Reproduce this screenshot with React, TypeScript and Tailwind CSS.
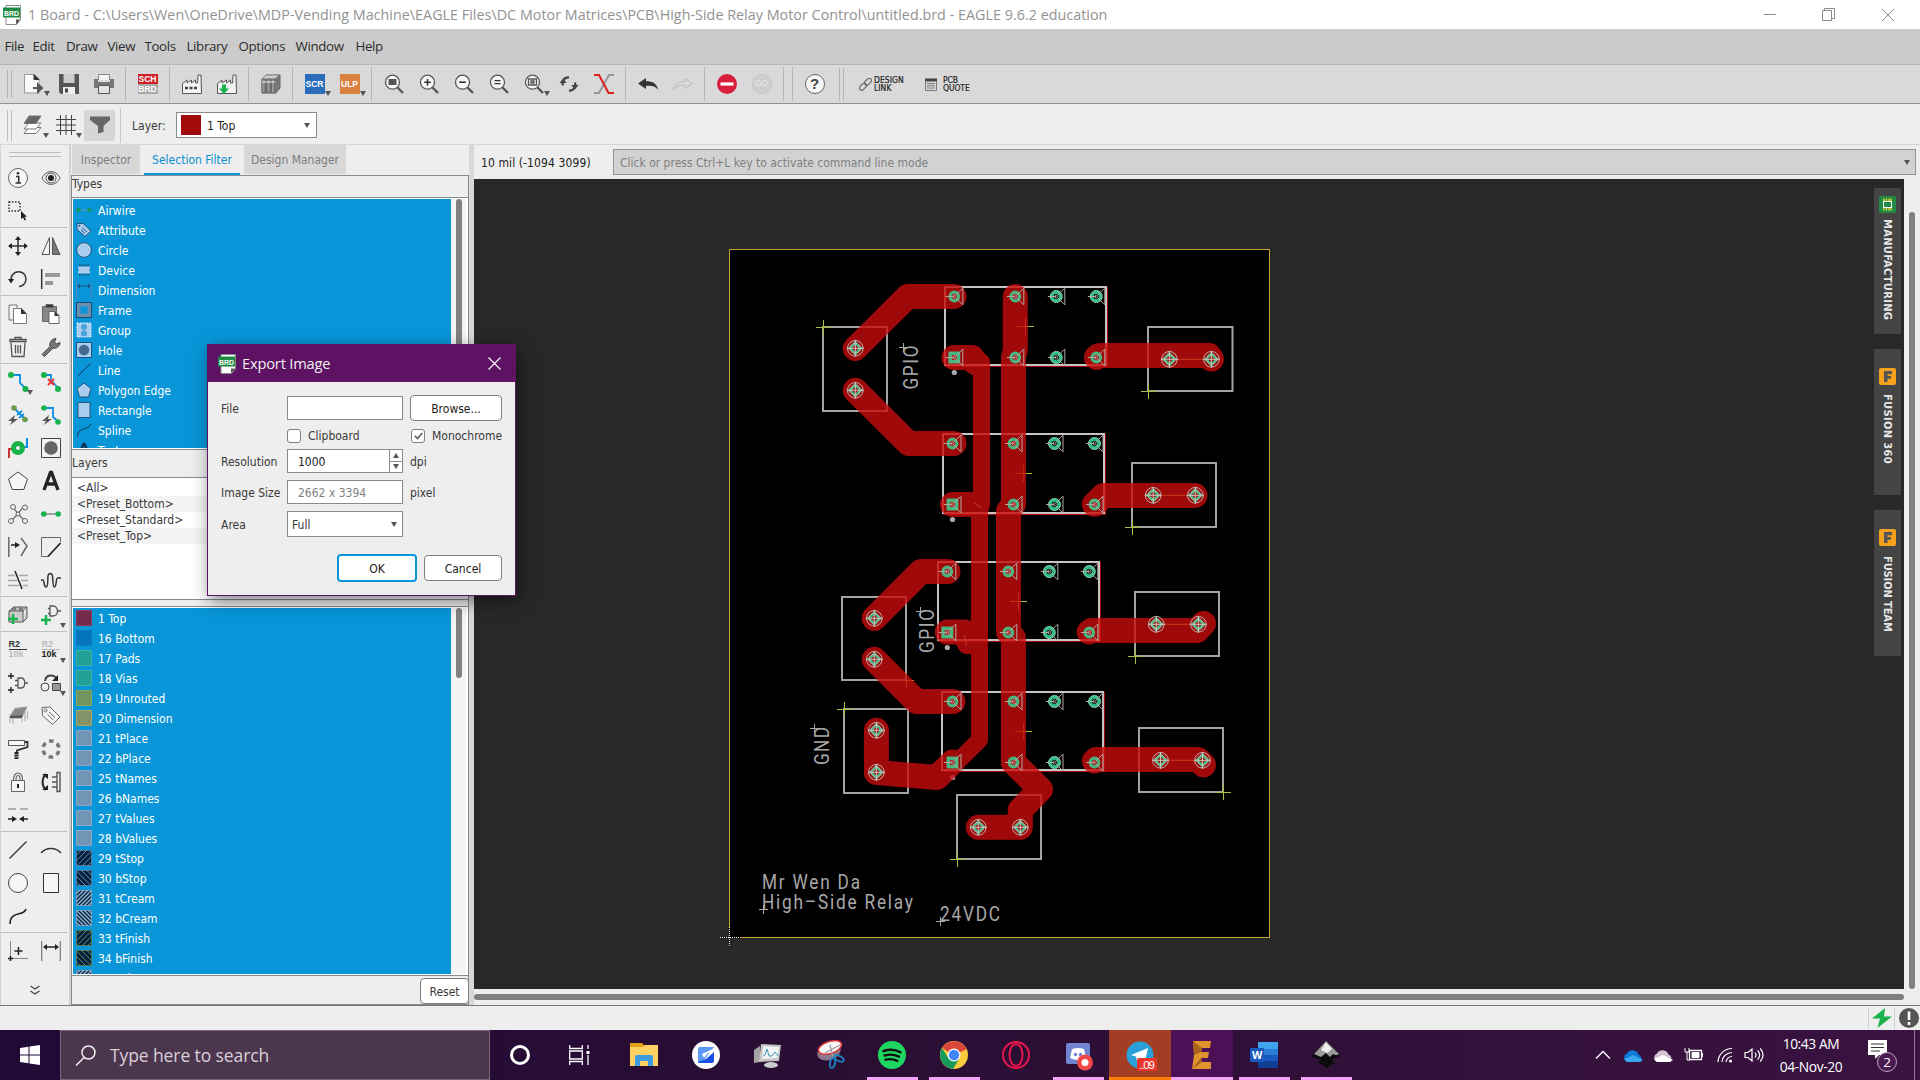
import React from "react";

type Kids = { children?: React.ReactNode };

/* ---------- icon helpers ---------- */
function Ico({ children, s = 20, c = "#333" }: Kids & { s?: number; c?: string }) {
  return (
    <svg width={s} height={s} viewBox="0 0 20 20" fill="none" stroke={c} strokeWidth="1" className="shrink-0 overflow-visible">
      {children}
    </svg>
  );
}

function BrdIcon() {
  return (
    <svg width="18" height="20" viewBox="0 0 18 20" className="shrink-0">
      <path d="M3 .5h14.5v14l-4 5H3z" fill="#fff" stroke="#888" />
      <path d="M13 19.5v-5h4.5z" fill="#555" />
      <rect x="0" y="2.5" width="17" height="10" fill="#1f8a43" />
      <text x="1" y="10.8" fontSize="8" fontWeight="bold" fill="#fff" fontFamily="Liberation Sans, sans-serif" textLength="15" lengthAdjust="spacingAndGlyphs">BRD</text>
    </svg>
  );
}

const Mag = ({ children }: Kids) => (
  <Ico s={20} c="#555">
    <circle cx="8.5" cy="8.2" r="7" fill="#f6f6f6" strokeWidth="1.3" />
    <path d="M13.5 13.5l5.5 5.5" strokeWidth="2.4" />
    {children}
  </Ico>
);

function Tool({ children, menu }: Kids & { menu?: boolean }) {
  return (
    <div className="relative flex h-full w-[35px] items-center justify-center">
      {children}
      {menu && <Drop className="absolute right-[1px] bottom-[7px]" />}
    </div>
  );
}

function Drop({ className = "" }: { className?: string }) {
  return (
    <svg width="6" height="5" viewBox="0 0 6 5" className={className}>
      <path d="M0 0h6L3 5z" fill="#555" />
    </svg>
  );
}

const Sep = () => (
  <div className="flex h-full w-[9px] justify-center">
    <div className="mt-[2px] h-[34px] w-px bg-[#b3b3b3]" />
  </div>
);

/* ---------- top bars ---------- */
function TitleBar() {
  return (
    <div className="flex h-[29px] shrink-0 items-center bg-white">
      <div className="ml-[3px] flex w-[25px]"><BrdIcon /></div>
      <span className="font-['Open_Sans','Noto_Sans',sans-serif] text-[14.3px] tracking-[0.035px] whitespace-nowrap text-[#929292]">
        1 Board - C:\Users\Wen\OneDrive\MDP-Vending Machine\EAGLE Files\DC Motor Matrices\PCB\High-Side Relay Motor Control\untitled.brd - EAGLE 9.6.2 education
      </span>
      <div className="ml-auto flex items-center text-[#8c8c8c]">
        <div className="flex w-[58px] justify-center"><div className="h-px w-3 bg-[#8c8c8c]" /></div>
        <svg className="mr-[21px] ml-[23px]" width="13" height="13" viewBox="0 0 13 13" fill="none" stroke="#8c8c8c"><path d="M.5 2.5h9v10h-9zM2.500 2.500v-2h10v10h-3" /></svg>
        <div className="flex w-16 justify-center"><svg width="12" height="12" viewBox="0 0 12 12" stroke="#8c8c8c"><path d="M0 0l12 12M12 0L0 12" /></svg></div>
      </div>
    </div>
  );
}

const MENUS: [string, number][] = [["File", 28], ["Edit", 33.5], ["Draw", 41.500], ["View", 37], ["Tools", 42], ["Library", 52], ["Options", 57], ["Window", 60], ["Help", 40]];

function MenuBar() {
  return (
    <div className="flex h-[36px] shrink-0 items-center border-b border-[#b5b5b5] bg-[#cbcbcb] pt-px pl-[4.500px] font-['Open_Sans','Noto_Sans',sans-serif] text-[13.300px] tracking-[-0.35px] text-[#2c2c2c]">
      {MENUS.map(([m, w]) => (
        <span key={m} className="whitespace-nowrap" style={{ width: w }}>{m}</span>
      ))}
    </div>
  );
}

function Toolbar() {
  return (
    <div className="flex h-[39px] shrink-0 border-b border-[#929292] bg-[#d9d9d9]">
      <div className="my-[5px] ml-[7px] w-[5px] border-x border-[#b3b3b3]" />
      <div className="w-1" />
      <Tool menu>
        <Ico><path d="M.5 .5h9.500l5 5v13.500H.5z" fill="#fafafa" stroke="#999" /><path d="M10 .5v5h5z" fill="#333" /><path d="M9 14h8M14 10.500l4 3.500-4 3.500z" stroke="#555" strokeWidth="2" /></Ico>
      </Tool>
      <Tool>
        <Ico><path d="M0 0h20v20H2l-2-2z" fill="#555" stroke="none" /><path d="M4.500 0h11v9h-11z" fill="#ccc" stroke="none" /><path d="M4 13h12v7H4z" fill="#eee" stroke="none" /><path d="M6 14.500h3v4H6z" fill="#444" stroke="none" /></Ico>
      </Tool>
      <Tool>
        <Ico><path d="M4.500 6V.5h11V6" fill="#f4f4f4" stroke="#888" /><path d="M0 5h4v3h12V5h4v9H0z" fill="#777" stroke="none" /><path d="M4.500 11.500h11v8h-11z" fill="#e4e4e4" stroke="#555" /></Ico>
      </Tool>
      <Sep />
      <Tool>
        <div className="flex h-5 w-5 flex-col text-center font-['Liberation_Sans',sans-serif] text-[8.500px] leading-[10px] font-bold text-white">
          <span className="bg-[#cc2127]">SCH</span><span className="bg-[#a9a9a9]">BRD</span>
        </div>
      </Tool>
      <Sep />
      <Tool><Factory /></Tool>
      <Tool><Factory down /></Tool>
      <Sep />
      <Tool>
        <Ico><path d="M1 5l4-4h14v13l-4 5H1z" fill="#777" stroke="#666" /><path d="M1 5l4-4h13l-4 4z" fill="#ccc" stroke="#888" /><path d="M1 5h3v14H1zM6 5h3v14H6zM10.500 5h3v14h-3z" fill="#999" stroke="#555" strokeWidth=".6" /><path d="M1 8h13" stroke="#eee" /></Ico>
      </Tool>
      <Sep />
      <Tool menu><div className="flex h-5 w-5 items-center justify-center bg-[#2a6ebb] font-['Liberation_Sans',sans-serif] text-[8.500px] font-bold text-white">SCR</div></Tool>
      <Tool menu><div className="flex h-5 w-5 items-center justify-center bg-[#db8240] font-['Liberation_Sans',sans-serif] text-[8.500px] font-bold text-white">ULP</div></Tool>
      <Sep />
      <Tool><Mag><path d="M4.500 5h8v6h-8z" fill="#555" stroke="none" /></Mag></Tool>
      <Tool><Mag><path d="M8.500 5v6.500M5.200 8.200h6.600" stroke="#333" strokeWidth="1.600" /></Mag></Tool>
      <Tool><Mag><path d="M5.200 8.200h6.600" stroke="#333" strokeWidth="1.600" /></Mag></Tool>
      <Tool><Mag><path d="M5.500 6.700h6M5.500 9.700h6" stroke="#333" strokeWidth="1.300" /></Mag></Tool>
      <Tool menu><Mag><path d="M4.500 5h8v6h-8zM7 7h3v2H7z" stroke="#555" strokeWidth="1.300" /></Mag></Tool>
      <Tool>
        <Ico c="#444"><path d="M10 3.500C4.500 3 3 8 4 11.500M10 16.500c5.500.5 7-4.500 6-8" strokeWidth="2.300" /><path d="M.5 9l3.500-4.500L7.800 9zM12.200 11l3.800 4.500 3.500-4.500z" fill="#444" stroke="none" /></Ico>
      </Tool>
      <Tool>
        <Ico><path d="M20 1h-5L5 19H0" stroke="#999" strokeWidth="2" /><path d="M0 1h5l9.500 18H20" stroke="#dd1f1f" strokeWidth="2" /></Ico>
      </Tool>
      <Sep />
      <Tool><Ico><path d="M0 9.500L8 4v3.200c7 0 11 2.500 12 8.800-3-4-6-4.200-12-4.200V15z" fill="#333" stroke="none" /></Ico></Tool>
      <Tool><Ico><path d="M19.500 9.500L12 4.500v3c-6 0-10.500 2-11.500 8 3-3.500 6-4 11.500-4v3z" stroke="#bbb" /></Ico></Tool>
      <Sep />
      <Tool><Ico><circle cx="10" cy="10" r="10" fill="#d91f3c" stroke="none" /><path d="M3.500 10h13" stroke="#fff" strokeWidth="3.200" /></Ico></Tool>
      <Tool>
        <div className="flex h-5 w-5 items-center justify-center rounded-full border border-[#c4c4c4] bg-[#cfcfcf] font-['Liberation_Sans',sans-serif] text-[9px] text-[#e8e8e8]">GO</div>
      </Tool>
      <Sep /><Sep />
      <Tool>
        <div className="flex h-5 w-5 items-center justify-center rounded-full border border-[#666] bg-[#f6f6f6] font-['Liberation_Sans',sans-serif] text-[15px] font-bold text-[#444]">?</div>
      </Tool>
      <div className="mt-[3px] ml-[7px] h-[33px] w-[5px] border-x border-[#b3b3b3]" />
      <div className="ml-[15px] flex items-center">
        <svg width="13" height="13" viewBox="0 0 13 13" fill="none" stroke="#666" strokeWidth="1.100"><rect x="5" y="1.500" width="8" height="4.500" rx="2.200" transform="rotate(-45 9 3.700)" /><rect x="0" y="6.500" width="8" height="4.500" rx="2.200" transform="rotate(-45 4 8.800)" /></svg>
        <Lbl a="DESIGN" b="LINK" w="ml-[2px] w-[52px] tracking-[0.05px]" />
        <svg width="12" height="13" viewBox="0 0 12 13" className="-ml-[1px]"><path d="M0 .5h12v3H0z" fill="#444" /><path d="M.5 3v9.500h11V3M2 5.500h8M2 7.700h8M2 10h8" fill="none" stroke="#777" /></svg>
        <Lbl a="PCB" b="QUOTE" w="ml-[6px] w-[50px] tracking-[-0.1px]" />
      </div>
    </div>
  );
}

function Lbl({ a, b, w }: { a: string; b: string; w: string }) {
  return (
    <div className={`${w} font-['DejaVu_Sans_Condensed','DejaVu_Sans',sans-serif] text-[8.500px] leading-[8px] text-[#222] [-webkit-text-stroke:0.2px_#222]`}>
      <div>{a}</div><div>{b}</div>
    </div>
  );
}

function Factory({ down }: { down?: boolean }) {
  return (
    <Ico c="#555">
      <path d="M.5 19.500v-10L5 6v3l4.500-3v3l4-3v3h2.200L16 1h3l.5 18.500z" fill="#f3f3f3" />
      {down ? <path d="M5 10.500h4v4h3l-5 5.500-5-5.500h3z" fill="#19b24b" stroke="none" /> : <path d="M3 14h12" strokeWidth="2.500" strokeDasharray="3 1.500" stroke="#444" />}
    </Ico>
  );
}

function LayerBar() {
  return (
    <div className="flex h-[41px] shrink-0 items-center border-b border-[#d6d6d6] bg-[#eee] pt-[2px]">
      <div className="ml-[7px] h-[31px] w-[5px] border-x border-[#bdbdbd]" />
      <div className="relative ml-[11px] flex w-[22px]">
        <Ico c="#777"><path d="M1 18.500l5-6h12l-5 6z" fill="#fff" /><path d="M1 14l5-6h12l-5 6z" fill="#fff" /><path d="M1 8.500l5-7.500h12l-5 7.500z" fill="#666" /></Ico>
        <Drop className="absolute -right-[4px] -bottom-[3px]" />
      </div>
      <div className="relative ml-[11px] flex w-[26px]">
        <Ico c="#444"><path d="M0 4.500h20M0 10h20M0 15.500h20M4.500 0v20M10 0v20M15.500 0v20" /></Ico>
        <Drop className="absolute right-0 -bottom-[3px]" />
      </div>
      <div className="ml-[2px] flex h-[31px] w-[31px] items-center justify-center rounded-[2px] bg-[#d6d6d6]">
        <Ico><path d="M0 1.500h20V5l-6.500 6v6L8 18.500V11L0 5z" fill="#666" stroke="none" /></Ico>
      </div>
      <div className="ml-[5px] h-[35px] w-px bg-[#c8c8c8]" />
      <span className="mt-[2px] ml-[11px] w-[44px]">Layer:</span>
      <div className="flex h-[26px] w-[141px] items-center border border-[#8a8a8a] bg-white pr-1.5 pl-1">
        <div className="h-5 w-5 bg-[#a00a0a]" />
        <span className="mt-[2px] ml-[6px] flex-1 text-[#222]">1 Top</span>
        <Drop />
      </div>
    </div>
  );
}

/* ---------- left tool palette ---------- */
const G = "#19b24b";
const B = "#0a8fe0";
const P: Record<string, React.ReactNode> = {
  info: <Ico c="#666"><circle cx="10" cy="10" r="9.500" fill="#f6f6f6" /><path d="M8 8.500h2.700V15M7.500 15h5.500" stroke="#333" strokeWidth="1.600" /><circle cx="10" cy="5.300" r="1.300" fill="#333" stroke="none" /></Ico>,
  eye: <Ico c="#555"><path d="M1 10c4-8.500 14-8.500 18 0-4 8.500-14 8.500-18 0z" /><circle cx="10" cy="10" r="5" /><circle cx="10" cy="10" r="3" fill="#222" stroke="none" /></Ico>,
  select: <Ico><path d="M1 1h11v9H1z" strokeDasharray="1.500 1.500" strokeWidth="1.500" /><path d="M13 10v8l2-1.500 1.500 3 1.500-.7-1.500-3h2.500z" fill="#222" stroke="none" /></Ico>,
  move: <Ico><path d="M10 2v16M2 10h16" strokeWidth="1.500" /><path d="M10 0l3 4H7zM10 20l3-4H7zM0 10l4-3v6zM20 10l-4-3v6z" fill="#222" stroke="none" /></Ico>,
  mirror: <Ico c="#555"><path d="M8.500 1.500v17H1z" fill="#f6f6f6" /><path d="M11.500 1.500v17H19z" fill="#777" /></Ico>,
  rotate: <Ico><path d="M3 12C2 0 18 0 18 10c0 5-4 7.500-7 7.500" strokeWidth="1.500" /><path d="M0 10h6l-3 4.500z" fill="#222" stroke="none" /></Ico>,
  align: <Ico><path d="M.7 0v20" strokeWidth="1.500" stroke="#333" /><path d="M4 6h15" stroke="#999" strokeWidth="4" /><path d="M4 14h8" stroke="#999" strokeWidth="4" /></Ico>,
  copy: <Ico c="#777"><path d="M1 1h8v15H1z" fill="#f2f2f2" /><path d="M5.500 4.500h8l5 5v10h-13z" fill="#fff" /><path d="M13 4l5.500 6H13z" fill="#333" stroke="none" /></Ico>,
  paste: <Ico c="#666"><path d="M1.500 2.500h14v15h-14z" fill="#888" /><path d="M5 .5h7v3H5z" fill="#333" /><path d="M8 7.500h6l4 4v8H8z" fill="#fff" /><path d="M13.500 7l4.500 5h-4.500z" fill="#333" stroke="none" /></Ico>,
  trash: <Ico c="#555"><path d="M3 5.500l1 14h12l1-14M2 4.500h16v-2H2zM7 2V.5h6V2M7.500 8v8.500M10 8v8.500M12.500 8v8.500" strokeWidth="1.300" /></Ico>,
  wrench: <Ico c="#444"><path d="M1 17.500l8-8c-1-4 2-8 6-8L13.500 5l2 2L19 5.500c0 4-4 6.500-7 5.500l-8.500 8.500z" fill="#777" /></Ico>,
  route: <Ico><path d="M3 3h9v8l6 6" stroke={B} strokeWidth="1.800" /><circle cx="3" cy="3" r="3" fill={G} stroke="none" /><circle cx="17.500" cy="17" r="3" fill={G} stroke="none" /></Ico>,
  ripup: <Ico><path d="M3 3h7v5l7 8" stroke={B} strokeWidth="1.800" /><circle cx="3" cy="3" r="3" fill={G} stroke="none" /><circle cx="17" cy="17" r="3" fill={G} stroke="none" /><path d="M7 7l6 6M13 7l-6 6" stroke="#e33" strokeWidth="2" /></Ico>,
  fast1: <Ico><path d="M6 3l11 11M9 10l5-4M11 13l5-4" stroke={B} strokeWidth="1.800" /><circle cx="6" cy="3" r="2.800" fill="#6a9b4a" stroke="none" /><circle cx="17" cy="14.500" r="2.800" fill="#6a9b4a" stroke="none" /><path d="M7 10l-7 6h4l-2 4 8-6H6z" fill="#555" stroke="none" /></Ico>,
  fast2: <Ico><path d="M3 3h9v9l6 5" stroke={B} strokeWidth="1.800" /><circle cx="3" cy="3" r="2.800" fill={G} stroke="none" /><circle cx="17" cy="17" r="2.800" fill={G} stroke="none" /><path d="M8 10l-7 6h4l-2 4 8-6H7z" fill="#555" stroke="none" /></Ico>,
  via: <Ico><path d="M1 20v-9h6" stroke="#c33" strokeWidth="2" /><path d="M19 0v9h-5" stroke={B} strokeWidth="2" /><circle cx="10" cy="10" r="4.500" stroke={G} strokeWidth="5" /></Ico>,
  hole: <Ico c="#444"><path d="M.5 .5h19v19H.5z" fill="#f2f2f2" /><circle cx="10" cy="10" r="6.800" fill="#666" stroke="none" /></Ico>,
  poly: <Ico c="#444"><path d="M10 1l9.500 7-3.700 10.500H4.200L.5 8z" fill="#f6f6f6" /></Ico>,
  text: <Ico><path d="M3 19L9.500 1.500h1L17 19M5.500 13h9" strokeWidth="3.300" stroke="#222" /></Ico>,
  junction: <Ico c="#666"><path d="M5 3.500l5 6 5-6M10 10l-6 6M10 10l6 6" strokeWidth="1.200" /><g fill="#eee"><circle cx="5" cy="3" r="2.500" /><circle cx="17" cy="3.500" r="2.500" /><circle cx="3" cy="17" r="2.500" /><circle cx="17" cy="17" r="2.500" /><circle cx="10" cy="10" r="2" /></g></Ico>,
  signal: <Ico><path d="M3 10h14" stroke="#999" strokeWidth="1.800" /><circle cx="2.800" cy="10" r="2.800" fill={G} stroke="none" /><circle cx="17.200" cy="10" r="2.800" fill={G} stroke="none" /></Ico>,
  bend: <Ico c="#666"><path d="M.8 0v20" strokeWidth="1.500" /><path d="M3 8h5" stroke="#222" strokeWidth="1.500" /><path d="M7 5l5 3-5 3z" fill="#222" stroke="none" /><path d="M13 1l6 8-6 10" strokeWidth="1.500" /></Ico>,
  miter: <Ico c="#666"><path d="M7 19.500H.5V.5h19V5" /><path d="M7 19.500L19.500 6" stroke="#222" strokeWidth="1.700" /></Ico>,
  split: <Ico c="#aaa"><path d="M0 5.500h7M11 5.500h9M0 10.500h9M13 10.500h7M0 15.500h11M15 15.500h5" strokeWidth="1.500" /><path d="M7 1l7 18" stroke="#222" strokeWidth="1.500" /></Ico>,
  meander: <Ico><path d="M0 10h2c1.500 0 .5 7 3 7s1.500-8 2-11c.5-3.500 4-3.500 4.500 0s0 11 2 11 1.500-9 3-9H20" strokeWidth="1.500" /></Ico>,
  addpart: <Ico c="#555"><path d="M1 6l5-4h13l-4 4zM1 6v11h14V6M15 17l4-4V2" fill="#ccc" /><ellipse cx="6" cy="4" rx="2" ry="1" /><ellipse cx="13" cy="4" rx="2" ry="1" /><path d="M0 14h10M5 9v10" stroke={G} strokeWidth="2.500" /></Ico>,
  addgate: <Ico c="#555"><path d="M9 1h3c6 0 6 10 0 10H9zM7 3.500h2M7 8.500h2M16.500 6H20" strokeWidth="1.300" /><path d="M0 15h10M5 10v10" stroke={G} strokeWidth="2.500" /></Ico>,
  repl: <Ico c="#555"><path d="M10 5h3c5 0 5 10 0 10h-3zM7 7.500h3M7 12.500h3M16.500 10H20" strokeWidth="1.300" /><path d="M0 3h6M3 0v6M0 17h6M3 14v6" stroke="#222" strokeWidth="1.400" /></Ico>,
  change: <Ico c="#444"><circle cx="4" cy="14" r="4" /><path d="M11.500 10.500h8v7h-8z" fill="#999" /><path d="M4 8c1-7 9-7 12-2" strokeWidth="2" /><path d="M17 2v6h-6z" fill="#222" stroke="none" /></Ico>,
  paint: <Ico c="#999"><path d="M2 17v-5M5 18v-6M14 16v-6M17 15V6M19.500 13V5" stroke="#aaa" /><path d="M2 10L7 2.500 19 1l-4 8-2 3H2z" fill="#888" /><path d="M2 10l13-1-1.500 3H2z" fill="#555" stroke="none" /></Ico>,
  tag: <Ico c="#666"><path d="M1 1.500l8-.5 10 10-7.500 7.500-10-9z" fill="#f6f6f6" /><circle cx="4.500" cy="4.500" r="1.500" /><path d="M8 6l6 5.500M6.500 8.500l6 5.500" /></Ico>,
  roller: <Ico c="#555"><path d="M.5 1.500h16v5H.5z" fill="#f6f6f6" /><path d="M17 3h2.500v5L9 11.500V14" stroke="#333" strokeWidth="1.800" /><path d="M8.500 13v7" strokeWidth="4" strokeDasharray="2 .6" stroke="#222" /></Ico>,
  array: <Ico c="#777"><circle cx="10" cy="10" r="8" strokeWidth="3.500" strokeDasharray="4.500 3.880" strokeDashoffset="-2" /></Ico>,
  lock: <Ico c="#666"><path d="M3.500 8.500h13v11h-13z" fill="#f6f6f6" /><path d="M5.500 8.500C5 -1.500 15-1.500 14.500 8.500M8 8c0-6 4-6 4 0" strokeWidth="1.200" /><path d="M10 12v4" stroke="#222" strokeWidth="2" /></Ico>,
  swap: <Ico c="#333"><path d="M5 2c-4.500 4-4.500 12 0 16" strokeWidth="2.200" /><path d="M1 2h6v5zM1 18h6v-5z" fill="#222" stroke="none" /><path d="M16 .5h3v19h-3zM11 5h5M11 10h5M11 15h5" stroke="#555" strokeWidth="1.400" /></Ico>,
  opt: <Ico c="#999"><path d="M0 4h8M12 4h8" strokeWidth="1.500" /><path d="M0 14h5M20 14h-5" stroke="#222" strokeWidth="1.500" /><path d="M4 11l5 3-5 3zM16 11l-5 3 5 3z" fill="#222" stroke="none" /></Ico>,
  line: <Ico><path d="M1.500 18.500l17-17" strokeWidth="1.300" /></Ico>,
  arc: <Ico><path d="M0 13c5-6 15-6 20 0" strokeWidth="1.300" /></Ico>,
  circle: <Ico c="#444"><circle cx="10" cy="10" r="9.500" fill="#f6f6f6" /></Ico>,
  rect: <Ico c="#333"><path d="M2.500 .5h15v19h-15z" fill="#f6f6f6" /></Ico>,
  spline: <Ico><path d="M2 18C2 4 16 11 18 3" strokeWidth="1.600" stroke="#222" /></Ico>,
  mark: <Ico c="#888"><path d="M2.500 0v17M5 17.500h15" /><path d="M10.500 6v8M6.500 10h8M2.500 15v5M0 17.500h5" stroke="#222" strokeWidth="1.500" /></Ico>,
  dim: <Ico c="#777"><path d="M.7 0v20M19.300 0v20" strokeWidth="1.200" /><path d="M3 6h14" stroke="#222" strokeWidth="1.500" /><path d="M2 6l4-3v6zM18 6l-4-3v6z" fill="#222" stroke="none" /></Ico>,
};

const RTwo = ({ flip }: { flip?: boolean }) => (
  <div className="flex w-[18px] flex-col font-['Liberation_Sans',sans-serif] text-[9px] leading-[9px] font-bold">
    <span className={`border-b ${flip ? "border-[#bbb] text-[#bbb]" : "border-[#333] text-[#333]"}`}>R2</span>
    <span className={flip ? "text-[#222]" : "text-[#bbb]"}>10k</span>
  </div>
);

const PALETTE: (string | null)[][] = [
  ["info", "eye", "select", null],
  ["move", "mirror", "rotate", "align"],
  ["copy", "paste", "trash", "wrench"],
  ["route", "ripup", "fast1", "fast2", "via", "hole", "poly", "text", "junction", "signal", "bend", "miter", "split", "meander"],
  ["addpart", "addgate"],
  ["r2", "r2b", "repl", "change", "paint", "tag", "roller", "array", "lock", "swap", "opt", null],
  ["line", "arc", "circle", "rect", "spline", null],
  ["mark", "dim"],
];
const DROPS = ["route", "addgate", "r2b", "change"];

function Palette() {
  return (
    <div className="flex w-[71px] shrink-0 flex-col border-r-2 border-l border-[#d2d2d2] bg-[#eee]">
      <div className="mx-2 mt-[7px] mb-[4px] h-[5px] w-[52px] border-y border-[#bdbdbd]" />
      {PALETTE.map((g, i) => (
        <div key={i} className={`mr-[2px] grid grid-cols-[33px_33px] ${i ? "border-t border-[#c0c0c0] pt-px" : ""}`}>
          {g.map((n, j) => (
            <div key={j} className="relative flex h-[33px] items-center justify-center">
              {n === "r2" ? <RTwo /> : n === "r2b" ? <RTwo flip /> : n && P[n]}
              {n && DROPS.includes(n) && <Drop className="absolute right-[1px] bottom-[3px]" />}
            </div>
          ))}
        </div>
      ))}
      <div className="mt-[18px] flex justify-center">
        <svg width="10" height="10" viewBox="0 0 10 10" fill="none" stroke="#444" strokeWidth="1.300"><path d="M.5 1L5 4l4.500-3M.5 6L5 9l4.500-3" /></svg>
      </div>
    </div>
  );
}

/* ---------- selection filter panel ---------- */
const L = "#a9cdee";
const D = "#1d5480";
const TYPES: [string, React.ReactNode][] = [
  ["Airwire", <><path d="M5 8h6" stroke="#5a9ac8" strokeWidth="1.300" /><circle cx="2.500" cy="8" r="2.300" fill="#149a6a" stroke="none" /><circle cx="13.500" cy="8" r="2.300" fill="#149a6a" stroke="none" /></>],
  ["Attribute", <><path d="M1 1.500h6l8 7.500-6 5.500-8-7z" fill={L} stroke={D} /><path d="M6 5.500l5 4.500M5 8l4 3.500" stroke={D} /><circle cx="3.500" cy="3.800" r="1" fill={D} stroke="none" /></>],
  ["Circle", <circle cx="8" cy="8" r="7.400" fill={L} stroke={D} />],
  ["Device", <><path d="M4 2.500v11M6.700 2.500v11M9.300 2.500v11M12 2.500v11" stroke={D} strokeWidth="1.500" /><path d="M2 4.500h12v2.300q-2 1.200 0 2.400v2.300H2V9.200q2-1.200 0-2.400z" fill={L} stroke="none" /></>],
  ["Dimension", <><path d="M.5 0v16M15.500 0v16" stroke="#4a88b8" /><path d="M2 4h12" stroke={D} /><path d="M1 4l3-2.500v5zM15 4l-3-2.500v5z" fill={D} stroke="none" /></>],
  ["Frame", <><path d="M2.500 2.500h11v11h-11z" stroke="#6b8fb0" strokeWidth="4" /><path d="M.5 .5h15v15H.5z" stroke="#1d4870" /></>],
  ["Group", <><path d="M1 1h14v14H1z" fill={L} stroke="#d4e8fa" strokeDasharray="2 1" /><circle cx="8" cy="5" r="3" fill="#4aa2dc" stroke="none" /><circle cx="8" cy="11.500" r="3" fill="#4aa2dc" stroke="none" /></>],
  ["Hole", <><path d="M.5 .5h15v15H.5z" fill={L} stroke={D} /><circle cx="8" cy="8" r="5.300" fill="#44698f" stroke="none" /></>],
  ["Line", <path d="M1.500 14.500l13-13" stroke="#0c3558" />],
  ["Polygon Edge", <path d="M8 1l7 5.500-2.500 8.500h-9L1 6.500z" fill={L} stroke={D} />],
  ["Rectangle", <path d="M2 .5h12v15H2z" fill={L} stroke={D} />],
  ["Spline", <path d="M1.500 14.500C2 4 13 9 14.500 2" stroke="#0c3558" />],
  ["Text", <path d="M2 15L7.500 2h1L14 15M4.500 11h7" stroke="#0c3558" strokeWidth="2.600" />],
];

const LAYERS: [string, string, string][] = [
  ["1 Top", "#742a4a", "#8d3a56"], ["16 Bottom", "#0575bb", "#057cc4"], ["17 Pads", "#22a095", "#3bb5a2"], ["18 Vias", "#22a095", "#3bb5a2"],
  ["19 Unrouted", "#71965f", "#88a85e"], ["20 Dimension", "#859468", "#a5a566"], ["21 tPlace", "#7295b5", "#8aa8c4"], ["22 bPlace", "#7295b5", "#8aa8c4"],
  ["25 tNames", "#7295b5", "#8aa8c4"], ["26 bNames", "#7295b5", "#8aa8c4"], ["27 tValues", "#7295b5", "#8aa8c4"], ["28 bValues", "#7295b5", "#8aa8c4"],
  ["29 tStop", "/", "#7295b5"], ["30 bStop", "\\", "#7295b5"], ["31 tCream", "//", "#8fb0cc"], ["32 bCream", "\\\\", "#8fb0cc"],
  ["33 tFinish", "/", "#71965f"], ["34 bFinish", "\\", "#71965f"], ["35 tGlue", "//", "#8fb0cc"],
];

function Swatch({ fill, edge }: { fill: string; edge: string }) {
  const hatch = fill[0] === "/" || fill[0] === "\\";
  if (!hatch) return <div className="h-4 w-4 border" style={{ background: fill, borderColor: edge }} />;
  const dense = fill.length > 1;
  const step = dense ? 4 : 5.500;
  const lines = Array.from({ length: 9 }, (_, i) => i * step);
  return (
    <svg width="16" height="16" viewBox="0 0 16 16">
      <rect width="16" height="16" fill="#04223f" />
      <g stroke={edge} strokeWidth={dense ? 1.500 : 0.900} transform={fill[0] === "\\" ? "matrix(-1 0 0 1 16 0)" : undefined}>
        {lines.map((n) => <path key={n} d={`M0 ${n}L${n} 0`} />)}
      </g>
      <rect x=".5" y=".5" width="15" height="15" fill="none" stroke={edge} strokeOpacity=".7" />
    </svg>
  );
}

function ListScroll({ handle }: { handle: string }) {
  return (
    <div className="w-[15px] shrink-0 bg-[#f4f4f4] pl-[5px]">
      <div className={`${handle} w-[6px] rounded-[3px] bg-[#808080]`} />
    </div>
  );
}

function SidePanel() {
  return (
    <div className="flex w-[398px] shrink-0 flex-col bg-[#eee]">
      <div className="flex h-[30px] shrink-0 pl-px text-[#7d7d7d]">
        <div className="flex h-[29px] w-[68px] items-center justify-center bg-[#d8d8d8] pt-px">Inspector</div>
        <div className="ml-[4px] flex h-[31px] w-[96px] items-center justify-center border-b-[3px] border-[#0a96d8] pt-[2px] whitespace-nowrap text-[#0a8fd4]">Selection Filter</div>
        <div className="ml-[4px] flex h-[29px] w-[102px] items-center justify-center bg-[#d8d8d8] pt-px whitespace-nowrap">Design Manager</div>
      </div>
      <div className="flex min-h-0 flex-1 flex-col border border-[#858a95]">
        <div className="h-[21px] shrink-0 leading-[17px]">Types</div>
        <div className="flex h-[253px] shrink-0 border-y border-[#858a95] bg-white pt-px pr-[2px] pb-px pl-px">
          <div className="flex-1 overflow-hidden bg-[#0896d8] pt-[1px]">
            {TYPES.map(([n, ic]) => (
              <div key={n} className="flex h-5 items-center pl-[3px] text-white">
                <svg width="16" height="16" viewBox="0 0 16 16" fill="none" className="mr-[6px]">{ic}</svg>
                <span className="mt-[2px]">{n}</span>
              </div>
            ))}
          </div>
          <ListScroll handle="h-full" />
        </div>
        <div className="h-[27px] shrink-0 leading-[27px]">Layers</div>
        <div className="h-[123px] shrink-0 border-y border-[#858a95] bg-white pt-[2px] leading-4">
          {["<All>", "<Preset_Bottom>", "<Preset_Standard>", "<Preset_Top>"].map((t) => (
            <div key={t} className="h-4 pl-[5px] even:bg-[#f4f4f4]">{t}</div>
          ))}
        </div>
        <div className="h-[6px] shrink-0" />
        <div className="flex min-h-0 flex-1 border-y border-[#858a95] bg-white pt-px pr-[2px] pb-px pl-px">
          <div className="flex-1 overflow-hidden bg-[#0896d8]">
            {LAYERS.map(([n, f, e]) => (
              <div key={n} className="flex h-5 items-center gap-[6px] pl-[3px] text-white">
                <Swatch fill={f} edge={e} />
                <span className="mt-[2px]">{n}</span>
              </div>
            ))}
          </div>
          <ListScroll handle="h-[70px]" />
        </div>
        <div className="flex h-[28px] shrink-0 justify-end pt-[2px]">
          <div className="-mr-px flex h-[26px] w-[49px] items-center justify-center rounded-[4px] border border-[#808080] bg-white pt-px">Reset</div>
        </div>
      </div>
    </div>
  );
}

/* ---------- board drawing (coordinates in window pixels) ---------- */
type Pt = [number, number];
const CONNS: { box: [number, number, number, number]; pads: Pt[]; mark: Pt; air?: boolean }[] = [
  { box: [823, 327, 64, 84], pads: [[855.300, 348.300], [855.300, 390.300]], mark: [823.500, 327.500] },
  { box: [1148, 327, 84.500, 64], pads: [[1169.400, 359.300], [1211.400, 359.300]], mark: [1148.500, 391.500], air: true },
  { box: [1132, 463, 84, 64], pads: [[1153.200, 495.300], [1195.300, 495.300]], mark: [1132.500, 527.500], air: true },
  { box: [1135, 592, 84, 64], pads: [[1156.300, 624.300], [1198.400, 624.300]], mark: [1135.500, 656.500], air: true },
  { box: [1139, 728, 84, 64], pads: [[1160.500, 760.300], [1202.500, 760.300]], mark: [1223.500, 792.500], air: true },
  { box: [842, 597, 64, 83], pads: [[874.300, 618.300], [874.300, 659.300]], mark: [906.500, 680.500] },
  { box: [844, 709, 64, 84], pads: [[876.400, 730.300], [876.400, 772.300]], mark: [844.500, 709.500] },
  { box: [957, 795, 84, 64], pads: [[978.300, 827.300], [1020.300, 827.300]], mark: [957.500, 859.500] },
];
const RELAYS: { o: Pt; box: [number, number, number, number] }[] = [
  { o: [954.300, 296.500], box: [945, 287, 161, 78] },
  { o: [952.500, 443.500], box: [943, 434, 161, 79] },
  { o: [947.300, 571.500], box: [938, 562, 161, 78] },
  { o: [952.500, 701.500], box: [942, 692, 161, 78] },
];
const COLS = [0, 61, 102, 142];
const WIDE = [
  "M855.300 348.500L907.700 296.500H954", "M855.300 390.300L908.700 443.500H954",
  "M1015.300 296.500V350L1013.500 358V504L1008.500 511V632L1013.400 638V762.300L1040.500 789.300L1020.300 810V827.300H978.300",
  "M954 357.500H972L976 363", "M952.500 504.500H975", "M947.300 632H965",
  "M876.400 730.300V772.500L937 777.500L952.500 762",
  "M1096.400 357.500L1099 355.500H1209L1211.400 359", "M1094.400 504.300L1103.500 495.500H1195", "M1089.200 632L1091 630.500H1197L1203.500 623.500", "M1094.400 761L1096 759.500H1198L1203.500 765",
  "M874.300 618.300L921 571.500H948", "M874.300 659.300L916.500 701.500H953",
];
const NARROW = ["M966 362H981.500V504L979.500 512V740L955 764", "M958 632L966.500 645.500H979"];

function RelayPads({ o }: { o: Pt }) {
  return (
    <>
      {[0, 61].map((dy) => COLS.map((dx, c) => {
        const onTrace = c === 0 || c === 1 || (c === 3 && dy > 0);
        const col = onTrace ? "#4ab67f" : "#2fbf86";
        return (
          <g key={`${dx}-${dy}`} transform={`translate(${o[0] + dx} ${o[1] + dy})`} fill="none">
            {c === 0 && dy ? <rect x="-4.200" y="-4.200" width="8.400" height="8.400" stroke={col} strokeWidth="3.500" /> : <circle r="4.300" stroke={col} strokeWidth="3.200" />}
            {!onTrace && <circle r="6" stroke="#8fd0b4" strokeWidth="1" />}
            <circle r="1.600" stroke="#bdbdbd" strokeWidth=".8" />
            <path d="M-8.500 0H0M1.500 -1.500L8 -8M1.500 1.500L8 8M8.500 -8.500V8.500" stroke="#b4a8a4" strokeWidth="1" />
          </g>
        );
      }))}
    </>
  );
}

const Plus = ({ x, y, r, c }: { x: number; y: number; r: number; c: string }) => <path d={`M${x - r} ${y}H${x + r}M${x} ${y - r}V${y + r}`} stroke={c} strokeWidth="1" fill="none" />;

function Label({ x, y, w, v, t }: { x: number; y: number; w: number; v?: boolean; t: string }) {
  return (
    <text transform={`translate(${x} ${y})${v ? " rotate(-90)" : ""} scale(.84 1)`} textLength={w / 0.84} fontFamily="Roboto, Liberation Sans, sans-serif" fontSize="20.500" fill="#a8a8a8">{t}</text>
  );
}

function Board() {
  return (
    <svg width="1430" height="810" viewBox="474 179 1430 810" className="block">
      <rect x="729.500" y="249.500" width="540" height="688" fill="#000" stroke="#c8a030" />
      <g fill="none" strokeWidth="2">
        {CONNS.map((c, i) => <rect key={i} x={c.box[0]} y={c.box[1]} width={c.box[2]} height={c.box[3]} stroke="#a3a3a3" />)}
        {RELAYS.map((r, i) => (
          <g key={i}>
            <path d={`M${r.box[0]} ${r.box[1] + r.box[3] + 1.500}h${r.box[2] + 1.500}V${r.box[1]}`} stroke="#a00a0a" strokeWidth="1" />
            <rect x={r.box[0]} y={r.box[1]} width={r.box[2]} height={r.box[3]} stroke="#c8c4c4" />
          </g>
        ))}
      </g>
      {CONNS.map((c, i) => <Plus key={i} x={c.mark[0]} y={c.mark[1]} r={7.500} c="#a9c03a" />)}
      {RELAYS.map((r, i) => <Plus key={i} x={r.o[0] + 71.200} y={r.o[1] + 30} r={8.500} c="#a9c03a" />)}
      {RELAYS.map((r, i) => <circle key={i} cx={r.o[0]} cy={r.o[1] + 76} r="2.600" fill="#aaa" />)}
      <g opacity=".8" fill="none" stroke="#c80c0c" strokeLinecap="round" strokeLinejoin="round">
        {WIDE.map((d) => <path key={d} d={d} strokeWidth="25" />)}
        {NARROW.map((d) => <path key={d} d={d} strokeWidth="17" />)}
      </g>
      {RELAYS.map((r, i) => <RelayPads key={i} o={r.o} />)}
      <path d="M974 503l8 5M964.500 635l2 11" stroke="#c4401a" fill="none" />
      {CONNS.map((c, i) => (
        <g key={i} fill="none">
          {c.air && <path d={`M${c.pads[0][0]} ${c.pads[0][1]}H${c.pads[1][0]}`} stroke="#c4401a" />}
          {c.pads.map(([x, y]) => (
            <g key={`${x}-${y}`} transform={`translate(${x} ${y})`}>
              <path d="M0 -5.500L5.500 0L0 5.500L-5.500 0Z" stroke="#4ab67f" strokeWidth="2.800" />
              <circle r="7.800" stroke="#c4b2b0" /><circle r="5" stroke="#c4b2b0" strokeWidth=".8" />
              <path d="M-8.500 0H8.500M0 -8.500V8.500" stroke="#d0c4c2" />
            </g>
          ))}
        </g>
      ))}
      <Label x={762} y={888.500} w={98} t="Mr Wen Da" />
      <Label x={762} y={909} w={151} t="High–Side Relay" />
      <Label x={940} y={921} w={60} t="24VDC" />
      <Label x={918} y={389.500} w={44} v t="GPIO" />
      <Label x={934} y={653} w={44} v t="GPIO" />
      <Label x={829} y={765} w={38} v t="GND" />
      {([[903.500, 347.500], [920.500, 611.500], [814.500, 728.500], [763.500, 909.500], [940.500, 921.500]] as Pt[]).map(([x, y]) => <Plus key={y} x={x} y={y} r={4.500} c="#a8a8a8" />)}
      <path d="M720 937.500H740M729.500 927V947" stroke="#000" />
      <path d="M720 937.500H740M729.500 927V947" stroke="#fff" strokeDasharray="1 1" />
    </svg>
  );
}

/* ---------- vertical service tabs ---------- */
function SideTab({ label, kind, pad }: { label: string; kind: "chip" | "f"; pad: string }) {
  return (
    <div className={`flex h-[146px] w-[27px] flex-col items-center bg-[#444] ${pad}`}>
      <svg width="17" height="17" viewBox="0 0 17 17" className="shrink-0">
        <rect width="17" height="17" rx="2" fill={kind === "chip" ? "#1f8a43" : "#f5a11c"} />
        {kind === "chip" ? (
          <><path d="M5 2.500v12M7.500 2.500v12M10 2.500v12M12 2.500v12" stroke="#ffd83a" strokeWidth="1.300" /><rect x="4.500" y="5.500" width="8" height="6" fill="#1f8a43" stroke="#fff" /></>
        ) : (
          <path d="M5 3h8v3.200H8.500V8H12v2.800H8.500V14H5z" fill="#555" />
        )}
      </svg>
      <span className="mr-[2px] font-['DejaVu_Sans_Condensed','DejaVu_Sans',sans-serif] text-[11px] font-bold whitespace-nowrap text-[#e8e8e8] [writing-mode:vertical-rl]">{label}</span>
    </div>
  );
}

/* ---------- export dialog ---------- */
function Check({ on, label }: { on?: boolean; label: string }) {
  return (
    <div className="flex items-center gap-[7px]">
      <span className="flex h-[14px] w-[14px] shrink-0 items-center justify-center rounded-[3px] border border-[#808080] bg-white">
        {on && <svg width="9" height="8" viewBox="0 0 9 8" fill="none" stroke="#666" strokeWidth="1.800"><path d="M.8 3.800l2.700 2.700L8.300 1" /></svg>}
      </span>
      <span className="mt-px whitespace-nowrap">{label}</span>
    </div>
  );
}

function ExportDialog() {
  return (
    <div className="absolute top-[344px] left-[207px] flex h-[252px] w-[309px] flex-col border border-[#5d1264] bg-[#eee] shadow-[3px_5px_16px_rgba(0,0,0,0.5)]">
      <div className="flex h-[37px] shrink-0 items-center bg-[#5d1264] pl-[10px]">
        <BrdIcon />
        <span className="ml-[6px] font-['Open_Sans','Noto_Sans',sans-serif] text-[14.700px] tracking-[-0.2px] text-[#eee]">Export Image</span>
        <svg className="mr-[14px] ml-auto" width="13" height="13" viewBox="0 0 13 13" stroke="#fff" strokeWidth="1.100"><path d="M.5 .5l12 12M12.500 .5l-12 12" /></svg>
      </div>
      <div className="grid grid-cols-[66px_116px_92px] pt-[13px] pl-[13px]">
        <span className="self-center pt-px">File</span>
        <div className="my-px h-6 border border-[#8a8a8a] bg-white" />
        <div className="ml-[7px] flex h-[26px] w-[92px] items-center justify-center rounded-[4px] border border-[#808080] bg-white pt-px text-[#222]">Browse...</div>
        <span className="h-[28px]" />
        <div className="pt-[5px]"><Check label="Clipboard" /></div>
        <div className="pt-[5px] pl-[8px]"><Check on label="Monochrome" /></div>
        <span className="self-center pt-px">Resolution</span>
        <div className="flex h-6 border border-[#8a8a8a] bg-white text-[#222]">
          <span className="flex flex-1 items-center pt-px pl-[10px]">1000</span>
          <div className="flex w-[13px] flex-col border-l border-[#8a8a8a]">
            <span className="flex flex-1 items-center justify-center border-b border-[#8a8a8a]"><Drop className="rotate-180" /></span>
            <span className="flex flex-1 items-center justify-center"><Drop /></span>
          </div>
        </div>
        <span className="self-center pt-px pl-[7px]">dpi</span>
        <span className="mt-[8px] self-center whitespace-nowrap">Image Size</span>
        <div className="mt-[7px] flex h-6 items-center border border-[#8a8a8a] bg-white pt-px pl-[10px] text-[#808080]">2662 x 3394</div>
        <span className="mt-[8px] self-center pl-[7px]">pixel</span>
        <span className="mt-[8px] self-center">Area</span>
        <div className="mt-[7px] flex h-[26px] items-center justify-between border border-[#8a8a8a] bg-white pt-px pr-[5px] pl-[4px]">Full<Drop /></div>
      </div>
      <div className="mt-[17px] mr-[13px] flex items-center justify-end gap-[7px] text-[#222]">
        <div className="flex h-7 w-20 items-center justify-center rounded-[4px] border-2 border-[#0a96d8] bg-white pt-px">OK</div>
        <div className="flex h-[26px] w-[78px] items-center justify-center rounded-[4px] border border-[#808080] bg-white pt-px">Cancel</div>
      </div>
    </div>
  );
}

/* ---------- windows taskbar ---------- */
const APPS: { k: string; bg?: string; bar?: string; art: React.ReactNode }[] = [
  { k: "explorer", art: <><path d="M0 2h12l2 2h13v21H0z" fill="#e0a014" /><path d="M0 6h13l2-2h13v21H0z" fill="#fdd262" /><path d="M5 25V16q0-2 2-2h14q2 0 2 2v9h-5v-5h-8v5z" fill="#3d9be0" /></> },
  { k: "maps", art: <><circle cx="14" cy="14" r="14" fill="#fff" /><path d="M6 8q0-2 2-2h14l-6 8-6 8H6z" fill="#5b9bf5" /><path d="M6 21l8-3 8-7v9q0 2-2 2H8q-2 0-2-1z" fill="#1a50e8" /><path d="M10 13l11-5-1 4h-4l-4 5z" fill="#fff" /></> },
  { k: "monitor", art: <><path d="M0 9l6-4v16l-6 1z" fill="#a4a4a4" /><path d="M7 3l20 1-2 16-20 1z" fill="#c4c4c4" /><path d="M9 5l16 1-1.500 11-15.500 1z" fill="#f0f4f4" /><path d="M9 15l2-1 2-6 2 7 3 0 3-4 3 4" stroke="#49b" fill="none" /><ellipse cx="17" cy="24" rx="7" ry="3" fill="#ccc" /></> },
  { k: "snip", art: <><ellipse cx="13" cy="11" rx="12" ry="8" fill="#8a7a90" transform="rotate(-18 13 11)" /><ellipse cx="14" cy="6.500" rx="12" ry="6" fill="#f8f8f8" stroke="#d33" strokeWidth="1.500" transform="rotate(-18 14 6.500)" /><path d="M14 4l3 12M24 4L9 12" stroke="#999" strokeWidth="1.300" /><ellipse cx="16.500" cy="22" rx="2.500" ry="5" fill="none" stroke="#1e84c8" strokeWidth="1.800" transform="rotate(12 16.500 22)" /><ellipse cx="23" cy="17.500" rx="5" ry="2.500" fill="none" stroke="#1e84c8" strokeWidth="1.800" transform="rotate(25 23 17.500)" /></> },
  { k: "spotify", bar: "bg-[#f3a4f6]", art: <><circle cx="14" cy="14" r="14" fill="#1ed760" /><path d="M5.500 10c6-2 12-1.500 17 1.300M6.500 14.500c5-1.500 10-1 14.500 1.200M7.500 18.700c4-1 8-.7 11.800 1.200" fill="none" stroke="#111" strokeWidth="2.400" strokeLinecap="round" /></> },
  { k: "chrome", bar: "bg-[#f3a4f6]", art: <><circle cx="14" cy="14" r="14" fill="#fbc93c" /><path d="M14 14L1.900 7A14 14 0 0 1 26.500 8z" fill="#d9483b" /><path d="M14 8h12.500L14 14z" fill="#d9483b" /><path d="M8.500 17L1.900 7A14 14 0 0 0 13 28l6-10z" fill="#1a9a5a" /><circle cx="14" cy="14" r="6.500" fill="#fff" /><circle cx="14" cy="14" r="5.200" fill="#4285f4" /></> },
  { k: "opera", art: <><circle cx="14" cy="14" r="13" fill="none" stroke="#e8144c" strokeWidth="2" /><ellipse cx="14" cy="14" rx="6.500" ry="11" fill="none" stroke="#e8144c" strokeWidth="2" /></> },
  { k: "discord", bar: "bg-[#f3a4f6]", art: <><path d="M2 4q0-2 2-2h20q2 0 2 2v22l-5-3H4q-2 0-2-2z" fill="#6f85d4" /><path d="M8 8q6-2 12 0l2 9q-8 4-16 0z" fill="#fff" /><circle cx="11.500" cy="13.500" r="1.700" fill="#6f85d4" /><circle cx="16.500" cy="13.500" r="1.700" fill="#6f85d4" /><circle cx="21" cy="21.500" r="8" fill="#f04747" /><circle cx="21" cy="21.500" r="3.500" fill="#fff" /></> },
  { k: "telegram", bg: "bg-[#a23e24]", bar: "bg-[#ff7a00]", art: <><circle cx="14" cy="14" r="13.500" fill="#2a9fd8" /><path d="M5 14l17-7-3 14-5-3.500-3 3-1-5z" fill="#fff" /><rect x="11" y="17" width="20" height="13" rx="1.500" fill="#e8352c" /><text x="13" y="27.500" fontSize="11.500" fill="#fff" fontFamily="Liberation Sans, sans-serif" textLength="16">..09</text></> },
  { k: "eagle", bg: "bg-[#4b1055]", bar: "bg-[#f3a4f6]", art: <><path d="M5 0h18l-1 7h-8l-1 4h8l-1 6h-7l1 4h9v7H4l2-14z" fill="#e0932c" /><path d="M5 0l9 7-1 4-7 3zM4 28l9-11 1 4z" fill="#a8641a" /></> },
  { k: "word", bar: "bg-[#f3a4f6]", art: <><path d="M8 1h20v7H8z" fill="#41a5ee" /><path d="M8 8h20v6H8z" fill="#2b7cd3" /><path d="M8 14h20v6H8z" fill="#185abd" /><path d="M8 20h20v7H8z" fill="#103f91" /><rect x="0" y="7" width="14" height="14" rx="1" fill="#185abd" /><text x="2" y="18" fontSize="11" fontWeight="bold" fill="#fff" fontFamily="Liberation Sans, sans-serif">W</text></> },
  { k: "inkscape", bar: "bg-[#f3a4f6]", art: <><path d="M14 0l13 13q1 4-5 4l-2 4 4 1-6 2-3 4-4-4-5-2 3-3-6-2q-4-1-2-4z" fill="#0c0c0c" /><path d="M14 0l13 13q-3 2-6 0l-3 3-4-4-5 4-7-3z" fill="#9a9a9a" /><path d="M14 1l6 7-5 4-6-3z" fill="#eee" /></> },
];

function Taskbar() {
  return (
    <div className="flex h-[50px] shrink-0 bg-[linear-gradient(90deg,#200a36,#2a0e34_45%,#3a1340)] font-['Open_Sans','Noto_Sans',sans-serif] text-white">
      <div className="flex w-[60px] items-center justify-center">
        <svg width="20" height="20" viewBox="0 0 20 20" fill="#fff"><path d="M0 3l8.500-1.300v7.800H0zM9.500 1.500L20 0v9.500H9.500zM0 10.500h8.500v7.800L0 17zM9.500 10.500H20V20L9.500 18.500z" /></svg>
      </div>
      <div className="flex w-[430px] items-center border border-[#7a667a] bg-[#4b364d] pl-[14px]">
        <svg width="21" height="21" viewBox="0 0 21 21" fill="none" stroke="#eee" strokeWidth="1.500"><circle cx="13.500" cy="7.500" r="6.500" /><path d="M9 12.500L1 20.500" /></svg>
        <span className="ml-[14px] text-[17.500px] tracking-[-0.1px] text-[#d8d0d8]">Type here to search</span>
      </div>
      <div className="flex w-[60px] items-center justify-center"><div className="h-[20px] w-[20px] rounded-full border-[3px] border-white" /></div>
      <div className="flex w-[63px] items-center justify-center pr-1">
        <svg width="21" height="20" viewBox="0 0 21 20" fill="none" stroke="#fff" strokeWidth="1.300"><path d="M.7 0v3.500h12.600V0M.7 20v-3.500h12.600V20M.7 6h12.600v8H.7zM19 0v4M19 10v10" /><path d="M17.500 6h3v3h-3z" fill="#fff" stroke="none" /></svg>
      </div>
      {APPS.map((a) => (
        <div key={a.k} className={`flex w-[62px] flex-col items-center ${a.bg ?? ""}`}>
          <div className="flex flex-1 items-center"><svg width="28" height="28" viewBox="0 0 28 28" className="overflow-visible">{a.art}</svg></div>
          <div className={`-mt-[3px] h-[3px] ${a.bg ? "w-full" : "w-[51px]"} ${a.bar ?? ""}`} />
        </div>
      ))}
      <div className="ml-auto flex items-center">
        <svg width="16" height="10" viewBox="0 0 16 10" fill="none" stroke="#fff" strokeWidth="1.400"><path d="M1 8.500L8 1.500l7 7" /></svg>
        {["#1e90e8", "#eee"].map((c) => (
          <svg key={c} className={c === "#eee" ? "ml-[10px]" : "ml-[12px]"} width="20" height="13" viewBox="0 0 20 13"><path d="M4.500 13a4.500 4.500 0 0 1-.5-8.500 6.300 6.300 0 0 1 11.500 1A4 4 0 0 1 16 13z" fill={c === "#eee" ? "#d4c4d4" : "#0f78d4"} /><path d="M1 10l9-4 10 5-3 2H4z" fill={c === "#eee" ? "#fff" : "#38a8f0"} /></svg>
        ))}
        <svg className="ml-[11px]" width="20" height="14" viewBox="0 0 20 14" fill="none" stroke="#fff"><path d="M5.500 2.500h12v9h-12z" strokeWidth="1.300" /><path d="M8 4.500h7v5H8z" fill="#fff" /><path d="M18.500 5v4M1 0v4h4V0M3 4v8h3" /></svg>
        <svg className="ml-[13px]" width="16" height="16" viewBox="0 0 16 16" fill="none" stroke="#fff" strokeWidth="1.200"><path d="M1 15A14 14 0 0 1 15 1.500M5 15A10 10 0 0 1 15 5.500M9 15a6 6 0 0 1 6-5.500" /><circle cx="13.500" cy="14" r="1.500" fill="#fff" stroke="none" /></svg>
        <svg className="ml-[11px]" width="20" height="16" viewBox="0 0 20 16" fill="none" stroke="#fff" strokeWidth="1.200"><path d="M1 5.500h3L8 2v12l-4-3.500H1zM11 5.500q2 2.500 0 5M13.700 3.500q4 4.500 0 9M16.300 1.500q5.500 6.500 0 13" /></svg>
        <div className="ml-[8px] w-[78px] text-center text-[13.800px] leading-[23px] tracking-[-0.4px] whitespace-nowrap"><div>10:43 AM</div><div>04-Nov-20</div></div>
        <svg className="ml-[17px]" width="34" height="34" viewBox="0 0 34 34"><path d="M1 2h19v15h-8l-4 4v-4H1z" fill="#fff" /><path d="M4 6h13M4 9.500h13M4 13h9" stroke="#333" /><circle cx="20" cy="24" r="9.500" fill="#4a1b50" stroke="#bba6bd" /><text x="16.300" y="29" fontSize="13.500" fill="#fff" fontFamily="Open Sans, sans-serif">2</text></svg>
        <div className="ml-[13px] h-[50px] w-[6px] border-l border-[#8d7a90]" />
      </div>
    </div>
  );
}

export default function App() {
  return (
    <div className="relative flex h-[1080px] w-[1920px] flex-col overflow-hidden bg-[#eee] font-['DejaVu_Sans_Condensed','DejaVu_Sans',sans-serif] text-[12px] text-[#3a3a3a]">
      <TitleBar />
      <MenuBar />
      <Toolbar />
      <LayerBar />
      <div className="flex h-[860px] shrink-0">
        <Palette />
        <SidePanel />
        <div className="w-[5px] shrink-0 bg-[#d8d8d8]" />
        <div className="flex min-w-0 flex-1 flex-col">
          <div className="flex h-[34px] shrink-0 items-start pt-[4px] pl-[7px]">
            <span className="w-[132px] pt-[5px] tracking-[0.1px] text-[#222]">10 mil (-1094 3099)</span>
            <div className="flex h-[26px] w-[1303px] items-center justify-between border border-[#929292] bg-[#d2d2d2] pt-px pr-[5px] pl-[6px] text-[#808080]">
              Click or press Ctrl+L key to activate command line mode<Drop />
            </div>
          </div>
          <div className="flex h-[810px] shrink-0">
            <div className="relative w-[1430px] bg-[#282828]">
              <Board />
              <div className="absolute top-[9px] right-[3px] flex flex-col gap-[15px]">
                <SideTab label="MANUFACTURING" kind="chip" pad="pt-2 gap-[6px] tracking-[0.35px]" />
                <SideTab label="FUSION 360" kind="f" pad="pt-[19px] gap-[9px] tracking-[0.35px]" />
                <SideTab label="FUSION TEAM" kind="f" pad="pt-[19px] gap-[10px] tracking-[-0.1px]" />
              </div>
            </div>
            <div className="w-4 bg-[#eee] pt-[33px] pl-[5px]"><div className="h-full w-[6px] rounded-[3px] bg-[#808080]" /></div>
          </div>
          <div className="pt-[5px]"><div className="h-[6px] w-[1430px] rounded-[3px] bg-[#808080]" /></div>
        </div>
      </div>
      <div className="flex h-[25px] shrink-0 items-center justify-end border-t border-[#777] bg-[#eee]">
        <div className="flex h-[21px] w-[27px] items-center justify-center border-x border-[#d0d0d0]">
          <svg width="20" height="20" viewBox="0 0 20 20"><path d="M13 0L0 10.500h8L5.500 20 20 8.500h-8z" fill="#19b24b" /></svg>
        </div>
        <svg className="mr-px ml-1" width="20" height="20" viewBox="0 0 20 20"><circle cx="10" cy="10" r="10" fill="#555" /><path d="M10 3.500v8.500M10 14v3" stroke="#fff" strokeWidth="2.600" /></svg>
      </div>
      <Taskbar />
      <ExportDialog />
    </div>
  );
}
